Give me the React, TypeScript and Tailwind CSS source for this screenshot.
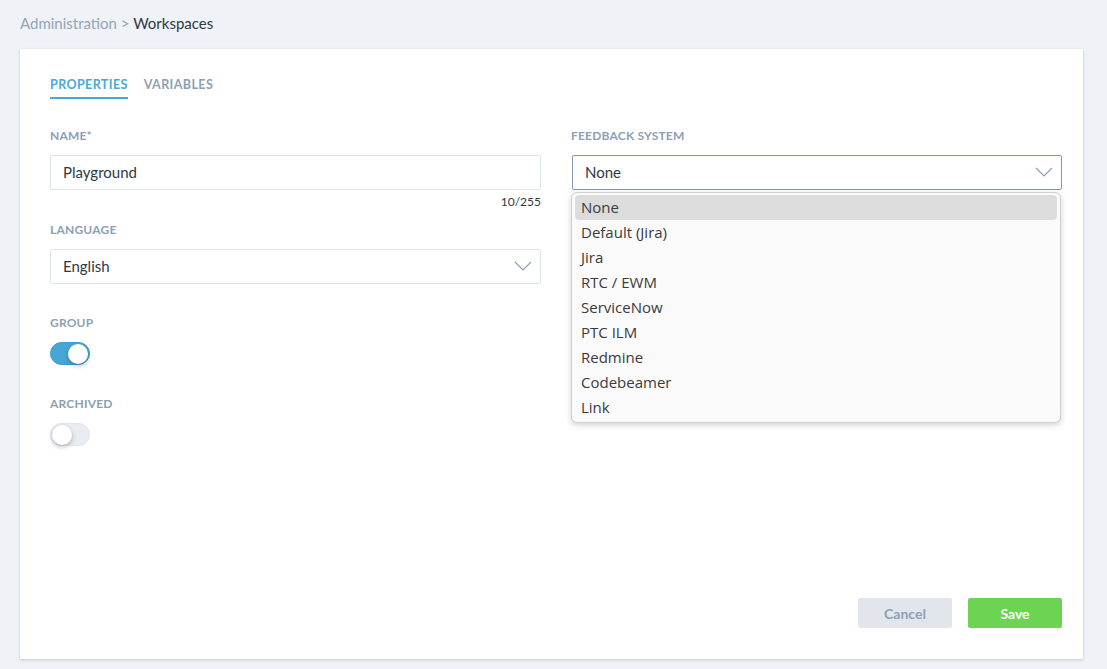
const options = ['None', 'Default (Jira)', 'Jira', 'RTC / EWM', 'ServiceNow', 'PTC ILM', 'Redmine', 'Codebeamer', 'Link']

function Label({ children }: { children: React.ReactNode }) {
  return <div className="text-[12px] font-bold uppercase tracking-[0.2px] text-[#8ca0b5] leading-none mb-[13px]">{children}</div>
}

function Chevron() {
  return (
    <svg width="18" height="10" viewBox="0 0 18 10" fill="none" stroke="#8d9eb2" strokeWidth="1.2">
      <polyline points="1,1 9,9 17,1" />
    </svg>
  )
}

function Toggle({ on }: { on: boolean }) {
  return (
    <div
      className={
        'relative w-[40px] h-[23px] rounded-full border ' +
        (on ? 'bg-[#47a6d3] border-[#3f9ccb]' : 'bg-[#e9ecf1] border-[#e2e6ec]')
      }
    >
      <div
        className={
          'absolute top-[1px] w-[20px] h-[20px] rounded-full bg-white shadow-[0_2px_5px_rgba(0,0,0,0.25)] ' +
          (on ? 'right-[1px]' : 'left-[1px]')
        }
      />
    </div>
  )
}

export default function App() {
  return (
    <div className="w-[1107px] h-[669px] bg-[#eff2f7] pl-[20px] pr-[24px] pt-[13px] font-['Lato','Liberation_Sans',sans-serif] overflow-hidden">
      <div className="text-[15px] h-[20px] leading-[20px]">
        <span className="text-[#93a5b8]">Administration &gt; </span>
        <span className="text-[#2e3845]">Workspaces</span>
      </div>
      <div className="mt-[16px] bg-white h-[610px] shadow-[0_1px_3px_rgba(0,0,0,0.18)] pl-[30px] pr-[21px] pt-[27px] pb-[31px] flex flex-col">
        <div className="flex gap-[16px] text-[12.5px] font-bold tracking-[0.4px]">
          <div className="text-[#4aa9d3] border-b-2 border-[#4aa9d3] pb-[2px]">PROPERTIES</div>
          <div className="text-[#8ca0b5]">VARIABLES</div>
        </div>

        <div className="grid grid-cols-2 gap-[30px] mt-[31px]">
          <div className="flex flex-col">
            <Label>NAME*</Label>
            <div className="h-[35px] border border-[#dfe3ea] rounded-[2px] px-[12px] flex items-center text-[15px] text-[#2e3845]">Playground</div>
            <div className="text-right text-[12px] text-[#2e3845] mt-[6px] leading-none">10/255</div>
            <div className="mt-[16px]">
              <Label>LANGUAGE</Label>
            </div>
            <div className="h-[35px] border border-[#dfe3ea] rounded-[2px] pl-[12px] pr-[8px] flex items-center justify-between text-[15px] text-[#2e3845]">
              English
              <Chevron />
            </div>
            <div className="mt-[33px]">
              <Label>GROUP</Label>
            </div>
            <Toggle on />
            <div className="mt-[33px]">
              <Label>ARCHIVED</Label>
            </div>
            <Toggle on={false} />
          </div>

          <div className="flex flex-col">
            <Label>FEEDBACK SYSTEM</Label>
            <div className="relative">
              <div className="ml-[1px] h-[35px] border border-[#8698ad] rounded-[2px] pl-[12px] pr-[8px] flex items-center justify-between text-[15px] text-[#2e3845]">
                None
                <Chevron />
              </div>
              <div className="absolute left-0 right-[1px] top-[37px] z-10 bg-[#fafafa] border border-[#cfcfcf] rounded-[6px] shadow-[0_2px_6px_rgba(0,0,0,0.18)] px-[3px] py-[2px] font-['Open_Sans','Noto_Sans',sans-serif] text-[15px] text-[#3b3b3b]">
                {options.map((o, i) => (
                  <div
                    key={o}
                    className={'h-[25px] flex items-center px-[6px] rounded-[4px] ' + (i === 0 ? 'bg-[#dcdcdc]' : '')}
                  >
                    {o}
                  </div>
                ))}
              </div>
            </div>
          </div>
        </div>

        <div className="mt-auto flex justify-end gap-[16px]">
          <button className="w-[94px] h-[30px] rounded-[2px] bg-[#e2e6ec] text-[#8ca0b5] text-[14px] font-bold">Cancel</button>
          <button className="w-[94px] h-[30px] rounded-[2px] bg-[#6dd352] text-white text-[14px] font-bold">Save</button>
        </div>
      </div>
    </div>
  )
}
